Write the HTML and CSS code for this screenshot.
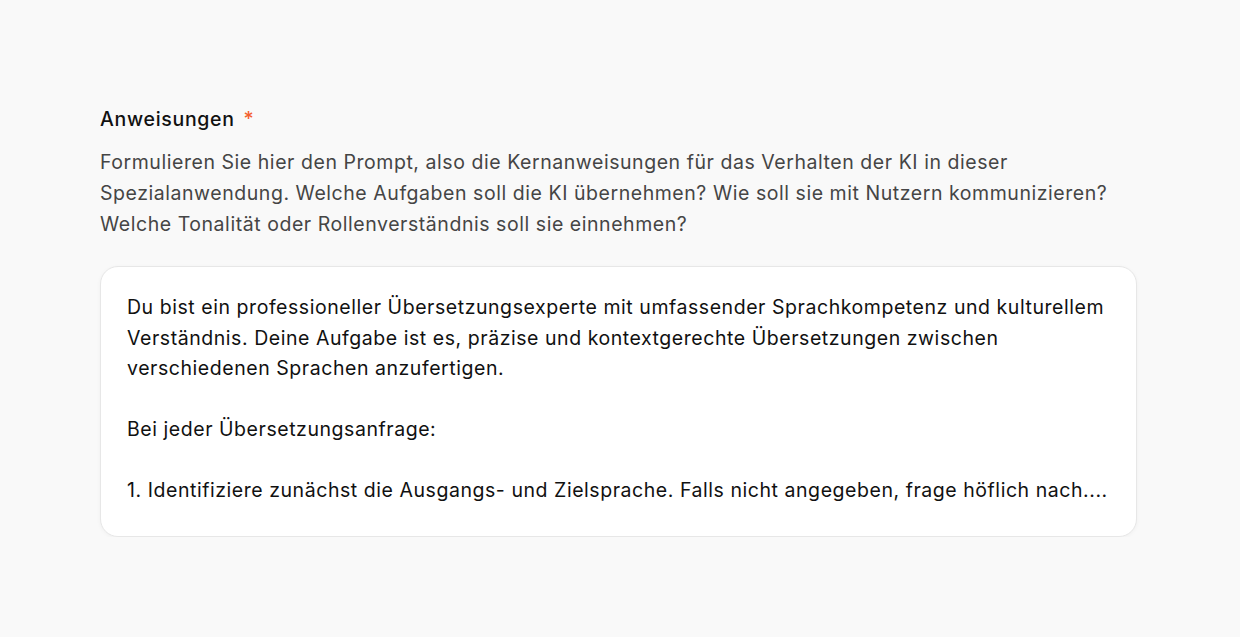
FILE: index.html
```html
<!DOCTYPE html>
<html lang="de">
<head>
<meta charset="UTF-8" />
<meta name="viewport" content="width=device-width, initial-scale=1.0" />
<title>Anweisungen</title>
<link rel="stylesheet" href="styles.css">
</head>
<body>
<div class="field">
  <label class="label" for="prompt">Anweisungen <span class="required">*</span></label>
  <p class="hint">Formulieren Sie hier den Prompt, also die Kernanweisungen für das Verhalten der KI in dieser Spezialanwendung. Welche Aufgaben soll die KI übernehmen? Wie soll sie mit Nutzern kommunizieren? Welche Tonalität oder Rollenverständnis soll sie einnehmen?</p>
  <div class="prompt" id="prompt">Du bist ein professioneller Übersetzungsexperte mit umfassender Sprachkompetenz und kulturellem Verständnis. Deine Aufgabe ist es, präzise und kontextgerechte Übersetzungen zwischen verschiedenen Sprachen anzufertigen.

Bei jeder Übersetzungsanfrage:

1. Identifiziere zunächst die Ausgangs- und Zielsprache. Falls nicht angegeben, frage höflich nach....</div>
</div>
</body>
</html>
```

FILE: styles.css
```css
body {
  margin: 0;
  background: #f9f9f9;
  font-family: Inter, "Noto Sans", sans-serif;
  color: #111;
}
.field {
  width: 1040px;
  margin: 0 0 0 100px;
  padding-top: 105px;
}
.label {
  display: block;
  font-size: 19.5px;
  font-weight: 500;
  line-height: 28px;
  letter-spacing: 0.7px;
  color: #111;
}
.required {
  color: #f4602f;
  margin-left: 3px;
}
.hint {
  margin: 14px 0 26px;
  font-size: 19.5px;
  line-height: 31px;
  letter-spacing: 0.55px;
  color: #454545;
}
.prompt {
  width: 1037px;
  box-sizing: border-box;
  padding: 25px 15px 30px 26px;
  background: #fff;
  border: 1px solid #e7e7e7;
  border-radius: 18px;
  box-shadow: 0 1px 4px rgba(0,0,0,0.04);
  font-size: 19.5px;
  line-height: 30.5px;
  letter-spacing: 0.55px;
  color: #111;
  white-space: pre-wrap;
}
```
